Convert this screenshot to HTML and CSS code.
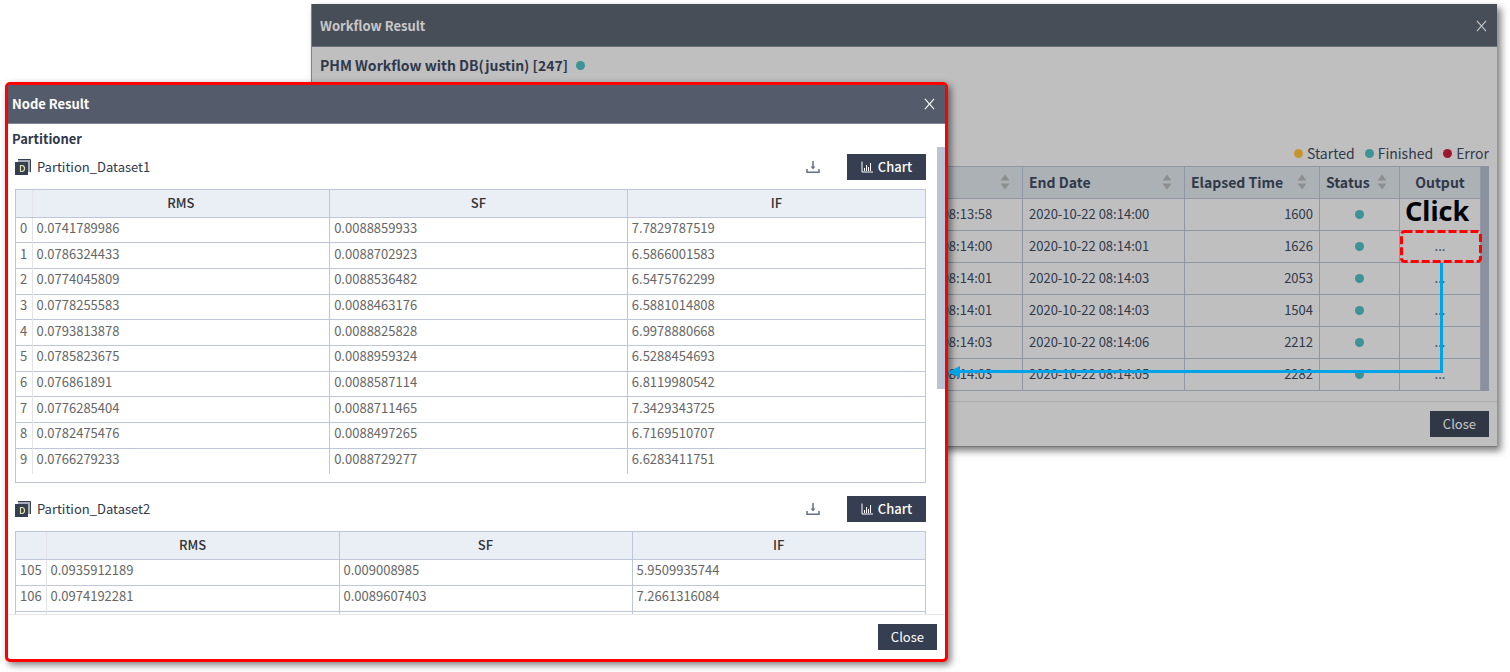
FILE: index.html
```html
<!DOCTYPE html>
<html lang="en">
<head>
<meta charset="utf-8">
<title>Workflow Result</title>
<link rel="stylesheet" href="styles.css">
</head>
<body>
<svg class="defs" aria-hidden="true">
  <symbol id="i-close" viewBox="0 0 12 12"><path d="M1 0.5L11 11.5M11 0.5L1 11.5" fill="none" stroke="currentColor" stroke-width="1.2"/></symbol>
  <symbol id="i-sort" viewBox="0 0 10 16"><path d="M5 0.5L9.5 6.5H0.5ZM0.5 9.5H9.5L5 15.5Z" fill="currentColor"/></symbol>
  <symbol id="i-download" viewBox="0 0 14 14"><path d="M7 1V8.5M1 9V12.3H13V9" fill="none" stroke="currentColor" stroke-width="1.5"/><path d="M4.5 6.5H9.5L7 9.3Z" fill="currentColor"/></symbol>
  <symbol id="i-chart" viewBox="0 0 12 12"><path d="M1 0.5V11H12M3.5 10V7M5.5 10V4M7.5 10V6M9.5 10V2" fill="none" stroke="currentColor" stroke-width="1"/></symbol>
  <symbol id="i-data" viewBox="0 0 16 16"><path d="M3 .5H15.5V13" fill="none" stroke="#353f51" stroke-width="1"/><path d="M3 1H15V13H13V3H3Z" fill="#a8aeb9"/><path d="M0 3H13V16H0Z" fill="#353f51"/><path d="M5.5 6.5V12.5H7Q9.5 12.3 9.5 9.5T7 6.5Z" fill="none" stroke="#dfe3a8" stroke-width="1.2"/></symbol>
</svg>
<main class="stage">
  <section class="window workflow" aria-labelledby="wf-title">
    <header class="bar">
      <h1 class="bar-title" id="wf-title">Workflow Result</h1>
      <button class="icon-button" aria-label="Close workflow result"><svg class="close-icon"><use href="#i-close"/></svg></button>
    </header>
    <div class="workflow-body">
      <h2 class="workflow-name">PHM Workflow with DB(justin) [247] <span class="dot"></span></h2>
      <ul class="legend">
        <li><span class="dot dot-started"></span>Started</li>
        <li><span class="dot"></span>Finished</li>
        <li><span class="dot dot-error"></span>Error</li>
      </ul>
      <div class="runs-frame">
        <table class="runs">
          <colgroup><col><col class="c-date"><col class="c-date"><col class="c-time"><col class="c-status"><col class="c-output"></colgroup>
          <thead>
            <tr>
              <th></th>
              <th><div class="sortable"><span></span><svg class="sort"><use href="#i-sort"/></svg></div></th>
              <th><div class="sortable">End Date<svg class="sort"><use href="#i-sort"/></svg></div></th>
              <th><div class="sortable">Elapsed Time<svg class="sort"><use href="#i-sort"/></svg></div></th>
              <th><div class="sortable">Status<svg class="sort"><use href="#i-sort"/></svg></div></th>
              <th class="center">Output</th>
            </tr>
          </thead>
          <tbody>
            <tr><td></td><td class="start">2020-10-22 08:13:58</td><td>2020-10-22 08:14:00</td><td class="num">1600</td><td class="center"><span class="dot"></span></td><td class="center output"><button class="more">...</button><strong class="click-note">Click</strong></td></tr>
            <tr><td></td><td class="start">2020-10-22 08:14:00</td><td>2020-10-22 08:14:01</td><td class="num">1626</td><td class="center"><span class="dot"></span></td><td class="center output"><button class="more">...</button><svg class="mark"><rect class="mark-box" x="1.5" y="1.5" rx="3"/></svg></td></tr>
            <tr><td></td><td class="start">2020-10-22 08:14:01</td><td>2020-10-22 08:14:03</td><td class="num">2053</td><td class="center"><span class="dot"></span></td><td class="center"><button class="more">...</button></td></tr>
            <tr><td></td><td class="start">2020-10-22 08:14:01</td><td>2020-10-22 08:14:03</td><td class="num">1504</td><td class="center"><span class="dot"></span></td><td class="center"><button class="more">...</button></td></tr>
            <tr><td></td><td class="start">2020-10-22 08:14:03</td><td>2020-10-22 08:14:06</td><td class="num">2212</td><td class="center"><span class="dot"></span></td><td class="center"><button class="more">...</button></td></tr>
            <tr><td></td><td class="start">2020-10-22 08:14:03</td><td>2020-10-22 08:14:05</td><td class="num">2282</td><td class="center"><span class="dot"></span></td><td class="center"><button class="more">...</button></td></tr>
          </tbody>
        </table>
        <div class="runs-scroll"></div>
      </div>
    </div>
    <footer class="foot"><button class="button">Close</button></footer>
  </section>

  <section class="window node" aria-labelledby="node-title">
    <header class="bar">
      <h1 class="bar-title" id="node-title">Node Result</h1>
      <button class="icon-button" aria-label="Close node result"><svg class="close-icon"><use href="#i-close"/></svg></button>
    </header>
    <h2 class="node-name">Partitioner</h2>
    <div class="scroller">
      <div class="datasets">
        <section class="dataset">
          <div class="dataset-head">
            <svg class="data-icon"><use href="#i-data"/></svg>
            <h3 class="dataset-name">Partition_Dataset1</h3>
            <button class="icon-button download" aria-label="Download Partition_Dataset1"><svg class="download-icon"><use href="#i-download"/></svg></button>
            <button class="button chart"><svg class="chart-icon"><use href="#i-chart"/></svg>Chart</button>
          </div>
          <div class="data-frame">
            <table class="data data-full">
              <colgroup><col class="c-index"><col><col><col></colgroup>
              <thead><tr><th></th><th>RMS</th><th>SF</th><th>IF</th></tr></thead>
              <tbody>
                <tr><td>0</td><td>0.0741789986</td><td>0.0088859933</td><td>7.7829787519</td></tr>
                <tr><td>1</td><td>0.0786324433</td><td>0.0088702923</td><td>6.5866001583</td></tr>
                <tr><td>2</td><td>0.0774045809</td><td>0.0088536482</td><td>6.5475762299</td></tr>
                <tr><td>3</td><td>0.0778255583</td><td>0.0088463176</td><td>6.5881014808</td></tr>
                <tr><td>4</td><td>0.0793813878</td><td>0.0088825828</td><td>6.9978880668</td></tr>
                <tr><td>5</td><td>0.0785823675</td><td>0.0088959324</td><td>6.5288454693</td></tr>
                <tr><td>6</td><td>0.076861891</td><td>0.0088587114</td><td>6.8119980542</td></tr>
                <tr><td>7</td><td>0.0776285404</td><td>0.0088711465</td><td>7.3429343725</td></tr>
                <tr><td>8</td><td>0.0782475476</td><td>0.0088497265</td><td>6.7169510707</td></tr>
                <tr><td>9</td><td>0.0766279233</td><td>0.0088729277</td><td>6.6283411751</td></tr>
              </tbody>
            </table>
          </div>
        </section>
        <section class="dataset">
          <div class="dataset-head">
            <svg class="data-icon"><use href="#i-data"/></svg>
            <h3 class="dataset-name">Partition_Dataset2</h3>
            <button class="icon-button download" aria-label="Download Partition_Dataset2"><svg class="download-icon"><use href="#i-download"/></svg></button>
            <button class="button chart"><svg class="chart-icon"><use href="#i-chart"/></svg>Chart</button>
          </div>
          <div class="data-frame">
            <table class="data">
              <colgroup><col class="c-index-wide"><col><col><col></colgroup>
              <thead><tr><th></th><th>RMS</th><th>SF</th><th>IF</th></tr></thead>
              <tbody>
                <tr><td>105</td><td>0.0935912189</td><td>0.009008985</td><td>5.9509935744</td></tr>
                <tr><td>106</td><td>0.0974192281</td><td>0.0089607403</td><td>7.2661316084</td></tr>
                <tr><td></td><td></td><td></td><td></td></tr>
              </tbody>
            </table>
          </div>
        </section>
      </div>
      <div class="scroll-track"><div class="scroll-thumb"></div></div>
    </div>
    <footer class="foot"><button class="button">Close</button></footer>
  </section>

  <div class="connector"><svg class="arrow-head" viewBox="0 0 12 12"><path d="M0 6L12 0V12Z" fill="#00a2e8"/></svg></div>
</main>
</body>
</html>
```

FILE: styles.css
```css
* { box-sizing: border-box; }

body {
  margin: 0;
  background: #fff;
  font-family: "Noto Sans CJK KR", "Noto Sans", sans-serif;
  font-size: 13px;
  line-height: 20px;
  color: #30384a;
}

h1, h2, h3, ul { margin: 0; padding: 0; font-size: inherit; }
button { font: inherit; border: 0; padding: 0; background: none; color: inherit; }
svg { display: block; }
.defs { position: absolute; width: 0; height: 0; }

.stage {
  position: relative;
  min-width: 1200px;
  min-height: 672px;
  padding: 4px 13px 0 311px;
  overflow: hidden;
}

/* Shared window parts */
.bar {
  display: flex;
  align-items: center;
  justify-content: space-between;
}
.bar-title { font-weight: 700; }
.close-icon { width: 11px; height: 12px; }

.foot {
  display: flex;
  justify-content: flex-end;
  padding: 9px 8px;
}

.button {
  display: flex;
  align-items: center;
  justify-content: center;
  height: 26px;
  padding: 0 13px;
  background: #353f51;
  color: #fff;
}

.dot {
  display: inline-block;
  width: 9px;
  height: 9px;
  border-radius: 50%;
  background: #3f9295;
}
.dot-started { background: #c7952f; }
.dot-error { background: #9c172f; }

/* Workflow window, dimmed behind the node window */
.workflow {
  background: #bfbfbf;
  border-left: 1px solid #7d828c;
  border-bottom: 1px solid #777;
  box-shadow: 4px 4px 7px rgba(0, 0, 0, .5);
}
.workflow .bar {
  height: 43px;
  padding: 1px 10px 0 8px;
  background: #484e58;
  border-bottom: 1px solid #6a707b;
  color: #c8c8c8;
}
.workflow-body { padding: 8px 8px 10px; }
.workflow-name { display: flex; align-items: center; gap: 8px; font-size: 14px; }
.legend {
  display: flex;
  justify-content: flex-end;
  gap: 10px;
  margin-top: 68px;
  list-style: none;
  font-size: 14px;
}
.legend li { display: flex; align-items: center; gap: 4px; }
.runs-frame { display: flex; margin-top: 3px; }
.runs { flex: 1; border-collapse: collapse; table-layout: fixed; }
.runs th, .runs td {
  height: 32px;
  padding: 0 6px;
  border: 1px solid #9196a5;
  text-align: left;
}
.runs th { background: #acb1b5; font-size: 14px; padding: 0 12px 2px 6px; }
.runs td { padding-bottom: 1px; }
.runs .num { text-align: right; }
.runs .start { padding-left: 11px; }
.runs .center { padding-left: 0; padding-right: 0; text-align: center; }
.runs .dot { display: block; margin: 0 auto; }
.c-date { width: 162px; }
.c-time { width: 135px; }
.c-status { width: 80px; }
.c-output { width: 81px; }
.sortable { display: flex; align-items: center; justify-content: space-between; white-space: nowrap; }
.sort { width: 10px; height: 16px; color: #8c8e90; }
.runs-scroll { width: 8px; background: #8c91a0; }
.workflow .foot { border-top: 1px solid #acacac; }
.workflow .button { background: #303846; color: #c8c8c8; }

/* Annotations */
.output { position: relative; }
.click-note {
  position: absolute;
  left: 5px;
  bottom: 1px;
  font-family: "Noto Sans", sans-serif;
  font-size: 27px;
  line-height: 36px;
  color: #000;
}
.mark { position: absolute; left: 0; top: -1px; width: 83px; height: 34px; }
.mark-box {
  width: 79px;
  height: 30px;
  fill: none;
  stroke: #f00;
  stroke-width: 3px;
  stroke-dasharray: 8 3;
}
.connector {
  position: absolute;
  left: calc(100% - 562px);
  right: 67px;
  top: 263px;
  height: 110px;
  display: flex;
  align-items: flex-end;
  border-right: 3px solid #00a2e8;
}
.connector::after { content: ""; flex: 1; height: 3px; background: #00a2e8; }
.arrow-head { width: 12px; height: 12px; margin-bottom: -5px; }

/* Node window */
.node {
  position: absolute;
  left: 5px;
  top: 82px;
  width: calc(100% - 567px);
  background: #fff;
  border: 3px solid #f00;
  border-radius: 5px;
  box-shadow: 3px 3px 7px rgba(0, 0, 0, .5);
}
.node .bar {
  height: 39px;
  padding: 0 10px 0 4px;
  background: #545c6b;
  border-bottom: 1px solid #7d8492;
  color: #fff;
}
.node-name { padding: 7px 4px 0; line-height: 16px; }
.scroller { display: flex; height: 467px; overflow: hidden; }
.datasets { flex: 1; padding: 7px 11px 0 7px; }
.scroll-track { width: 8px; }
.scroll-thumb { height: 242px; background: #bcc3d3; }
.dataset { margin-bottom: 13px; }
.dataset-head { display: flex; align-items: center; }
.data-icon { width: 16px; height: 16px; margin-right: 6px; }
.dataset-name { flex: 1; font-weight: 400; }
.download { margin-right: 27px; color: #667085; }
.download-icon { width: 14px; height: 14px; }
.chart { gap: 5px; width: 79px; padding: 0; font-weight: 500; }
.chart-icon { width: 12px; height: 12px; }

.data-frame {
  margin-top: 9px;
  padding-bottom: 8px;
  border: 1px solid #bfc6dc;
}
.data { width: 100%; border-collapse: collapse; table-layout: fixed; color: #666; }
.data-full { height: 284px; }
.data th {
  height: 27px;
  padding: 0;
  background: #e9eff5;
  border-bottom: 1px solid #bfc6dc;
  font-weight: 500;
  color: #333;
}
.data td { height: 26px; padding: 0 4px 4px; border-top: 1px solid #bfc6dc; line-height: 18px; }
.data-full td { height: 25px; }
.data th + th, .data td + td { border-left: 1px solid #bfc6dc; }
.data th:nth-child(2), .data td:nth-child(2) { border-left-color: #e4e4e8; }
.c-index { width: 16px; }
.c-index-wide { width: 30px; }
.node .foot { height: 45px; border-top: 1px solid #e6e8ec; }
```
